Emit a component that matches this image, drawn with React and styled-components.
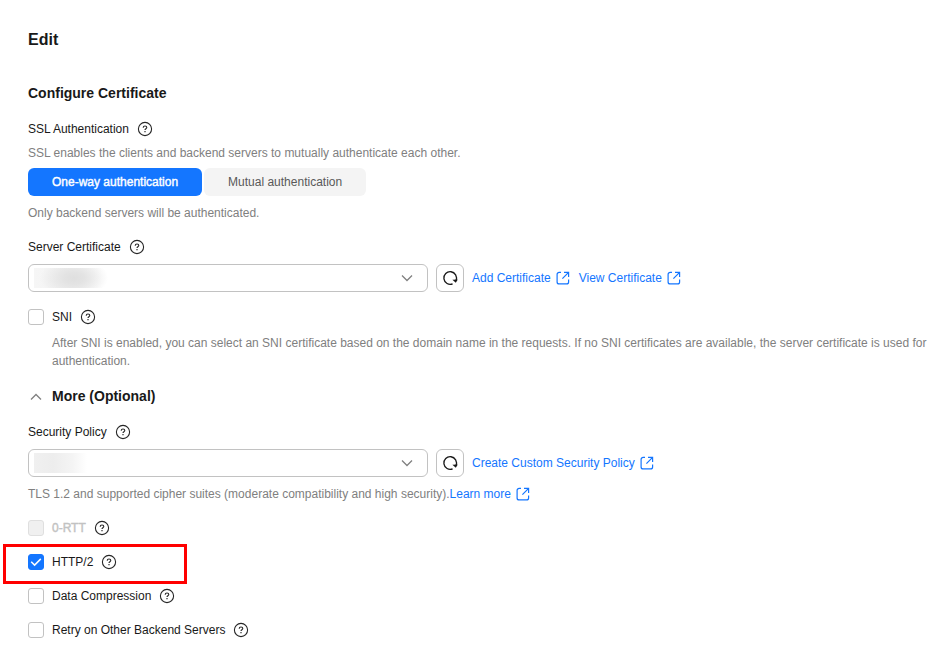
import React, { useState } from "react";
import styled, { createGlobalStyle } from "styled-components";

const GlobalStyle = createGlobalStyle`
	*, *::before, *::after {
		box-sizing: border-box;
	}

	body {
		margin: 0;
		background: #fff;
		color: #191919;
		font-family: "Liberation Sans", Arial, sans-serif;
		font-size: 12px;
		line-height: 18px;
	}

	button, select, input {
		font: inherit;
		color: inherit;
	}
`;

const Page = styled.main`
	padding: 28px 20px 8px 28px;
`;

const PageTitle = styled.h1`
	margin: 0 0 30px;
	font-size: 16px;
	line-height: 24px;
`;

const SectionTitle = styled.h2`
	margin: 0 0 16px;
	font-size: 14px;
	line-height: 22px;
`;

const Field = styled.div`
	display: flex;
	flex-direction: column;
	gap: 8px;
	margin-bottom: 16px;
`;

const FieldHead = styled.div`
	display: flex;
	flex-direction: column;
	gap: 6px;
	margin-bottom: 6px;
`;

const LabelRow = styled.div`
	display: flex;
	align-items: center;
	gap: 8px;
	height: 18px;
`;

const Hint = styled.p`
	margin: 0;
	color: #808080;
	padding-left: ${({ $indented }) => ($indented ? 24 : 0)}px;
`;

const HelpButton = styled.button`
	display: flex;
	padding: 0;
	border: 0;
	background: none;
	cursor: pointer;
`;

const Segments = styled.div`
	display: flex;
	gap: 2px;
`;

const Segment = styled.button`
	height: 28px;
	padding: 0 24px;
	border: 0;
	border-radius: 6px;
	background: ${({ $active }) => ($active ? "#1476ff" : "#f4f4f4")};
	color: ${({ $active }) => ($active ? "#fff" : "#595959")};
	-webkit-text-stroke: ${({ $active }) => ($active ? "0.4px #fff" : "0")};
	cursor: pointer;
`;

const ControlRow = styled.div`
	display: flex;
	align-items: center;
	gap: 8px;
`;

const SelectBox = styled.div`
	position: relative;
	flex: 0 1 400px;
	height: 28px;

	> svg {
		position: absolute;
		top: 6px;
		right: 13px;
		pointer-events: none;
	}
`;

const Select = styled.select`
	width: 100%;
	height: 100%;
	padding: 0 36px 0 8px;
	border: 1px solid #c2c2c2;
	border-radius: 6px;
	background: #fff;
	appearance: none;
`;

const MaskedValue = styled.span`
	position: absolute;
	top: 4px;
	left: 6px;
	width: 76px;
	height: 20px;
	background: ${({ $light }) =>
		$light
			? "linear-gradient(90deg, #f0f0f0, #ededed 25%, #f4f4f4 50%, #fff 70%)"
			: "radial-gradient(ellipse 34px 20px at 40px 10px, #dfdfdf, #e3e3e3 30%, transparent), linear-gradient(90deg, #f6f6f6, #f3f3f3 50%, #fff 90%)"};
	pointer-events: none;
`;

const IconButton = styled.button`
	display: flex;
	align-items: center;
	justify-content: center;
	width: 28px;
	height: 28px;
	padding: 0;
	border: 1px solid #c2c2c2;
	border-radius: 6px;
	background: #fff;
	cursor: pointer;
`;

const Link = styled.a`
	display: inline-flex;
	align-items: center;
	gap: 4px;
	color: #1476ff;
	text-decoration: none;
	vertical-align: top;
`;

const MoreHeading = styled.h2`
	margin: 0 0 16px;
	font-size: 14px;
	line-height: 21px;
`;

const MoreToggle = styled.button`
	display: flex;
	align-items: center;
	gap: 8px;
	padding: 0;
	border: 0;
	background: none;
	cursor: pointer;
`;

const CheckLabel = styled.label`
	display: flex;
	align-items: center;
	gap: 8px;
	color: ${({ $disabled }) => ($disabled ? "#c2c2c2" : "inherit")};
	-webkit-text-stroke: ${({ $disabled }) => ($disabled ? "0.4px #c2c2c2" : "0")};
`;

const CheckInput = styled.span`
	position: relative;
	display: flex;

	input {
		appearance: none;
		width: 16px;
		height: 16px;
		margin: 0;
		border: 1px solid #c2c2c2;
		border-radius: 3px;
		background: #fff;
	}

	input:checked {
		border-color: #1476ff;
		background: #1476ff;
	}

	input:disabled {
		border-color: #dfdfdf;
		background: #f0f0f0;
	}

	svg {
		position: absolute;
		inset: 0;
		pointer-events: none;
	}
`;

const CheckRow = styled.div`
	position: relative;
	display: flex;
	align-items: center;
	gap: 8px;
	height: 18px;
`;

const CheckList = styled.div`
	display: flex;
	flex-direction: column;
	gap: 16px;
`;

// red frame drawn over the row
const Marker = styled.span`
	position: absolute;
	top: -9px;
	left: -25px;
	width: 184px;
	height: 40px;
	border: 3px solid #f00;
	pointer-events: none;
`;

const HelpIcon = () => (
	<svg width="16" height="16" viewBox="0 0 16 16" fill="none" stroke="#262626">
		<circle cx="8" cy="8" r="6.6" strokeWidth="1.1" />
		<path d="M6.2 6.7c0-1.1.8-1.7 1.8-1.7s1.8.6 1.8 1.6c0 1.1-1.8 1.2-1.8 2.4" strokeWidth="1.1" />
		<path d="M8 10v1.2" strokeWidth="1.2" />
	</svg>
);

const ExternalIcon = () => (
	<svg width="16" height="16" viewBox="0 0 16 16" fill="none" stroke="currentColor" strokeWidth="1.2">
		<path d="M6 2.4H4.1a2 2 0 0 0-2 2v7.5a2 2 0 0 0 2 2h7.5a2 2 0 0 0 2-2V9.6" />
		<path d="M9 2.4h4.6V7M13.6 2.4L7.4 8.6" />
	</svg>
);

const RefreshIcon = () => (
	<svg width="16" height="16" viewBox="0 0 16 16" fill="none" stroke="#191919" strokeWidth="1.3">
		<path d="M10.6 13.8A6.3 6.3 0 1 1 14 10.4" />
		<path d="M10.4 9.8l3.4 3 2-3.4z" fill="#191919" stroke="none" />
	</svg>
);

const ChevronIcon = ({ up }) => (
	<svg width="16" height="16" viewBox="0 0 16 16" fill="none" stroke="#808080" strokeWidth="1.3">
		<path d={up ? "M3 10.5l5-5 5 5" : "M3 5.5l5 5 5-5"} />
	</svg>
);

const Help = ({ topic }) => (
	<HelpButton type="button" aria-label={`About ${topic}`}>
		<HelpIcon />
	</HelpButton>
);

const ExternalLink = ({ children }) => (
	<Link href="#">
		{children}
		<ExternalIcon />
	</Link>
);

const SelectField = ({ id, label, light, hint, children }) => (
	<Field>
		<LabelRow>
			<label htmlFor={id}>{label}</label>
			<Help topic={label} />
		</LabelRow>
		<ControlRow>
			<SelectBox>
				<Select id={id} />
				<MaskedValue $light={light} />
				<ChevronIcon />
			</SelectBox>
			<IconButton type="button" aria-label={`Refresh ${label}`}>
				<RefreshIcon />
			</IconButton>
			{children}
		</ControlRow>
		{hint}
	</Field>
);

const Check = ({ label, defaultChecked = false, disabled, marked }) => {
	const [checked, setChecked] = useState(defaultChecked);

	return (
		<CheckRow>
			<CheckLabel $disabled={disabled}>
				<CheckInput>
					<input
						type="checkbox"
						checked={checked}
						disabled={disabled}
						onChange={(e) => setChecked(e.target.checked)}
					/>
					{checked && (
						<svg width="16" height="16" viewBox="0 0 16 16" fill="none" stroke="#fff" strokeWidth="1.5">
							<path d="M3.2 7.8l3.4 3.3 6.2-6.2" />
						</svg>
					)}
				</CheckInput>
				{label}
			</CheckLabel>
			<Help topic={label} />
			{marked && <Marker />}
		</CheckRow>
	);
};

const App = () => {
	const [mode, setMode] = useState("one-way");
	const [open, setOpen] = useState(true);

	return (
		<>
			<GlobalStyle />
			<Page>
				<PageTitle>Edit</PageTitle>
				<SectionTitle>Configure Certificate</SectionTitle>

				<FieldHead>
					<LabelRow>
						<span id="ssl-label">SSL Authentication</span>
						<Help topic="SSL Authentication" />
					</LabelRow>
					<Hint>SSL enables the clients and backend servers to mutually authenticate each other.</Hint>
				</FieldHead>
				<Field>
					<Segments role="group" aria-labelledby="ssl-label">
						<Segment
							type="button"
							$active={mode === "one-way"}
							aria-pressed={mode === "one-way"}
							onClick={() => setMode("one-way")}
						>
							One-way authentication
						</Segment>
						<Segment
							type="button"
							$active={mode === "mutual"}
							aria-pressed={mode === "mutual"}
							onClick={() => setMode("mutual")}
						>
							Mutual authentication
						</Segment>
					</Segments>
					<Hint>Only backend servers will be authenticated.</Hint>
				</Field>

				<SelectField id="server-certificate" label="Server Certificate">
					<ExternalLink>Add Certificate</ExternalLink>
					<ExternalLink>View Certificate</ExternalLink>
				</SelectField>

				<Field>
					<Check label="SNI" />
					<Hint $indented>
						After SNI is enabled, you can select an SNI certificate based on the domain name in the requests. If no SNI
						certificates are available, the server certificate is used for authentication.
					</Hint>
				</Field>

				<MoreHeading>
					<MoreToggle type="button" aria-expanded={open} onClick={() => setOpen(!open)}>
						<ChevronIcon up={open} />
						More (Optional)
					</MoreToggle>
				</MoreHeading>

				{open && (
					<>
						<SelectField
							id="security-policy"
							label="Security Policy"
							light
							hint={
								<Hint>
									TLS 1.2 and supported cipher suites (moderate compatibility and high security).
									<ExternalLink>Learn more</ExternalLink>
								</Hint>
							}
						>
							<ExternalLink>Create Custom Security Policy</ExternalLink>
						</SelectField>
						<CheckList>
							<Check label="0-RTT" disabled />
							<Check label="HTTP/2" defaultChecked marked />
							<Check label="Data Compression" />
							<Check label="Retry on Other Backend Servers" />
						</CheckList>
					</>
				)}
			</Page>
		</>
	);
};

export default App;
